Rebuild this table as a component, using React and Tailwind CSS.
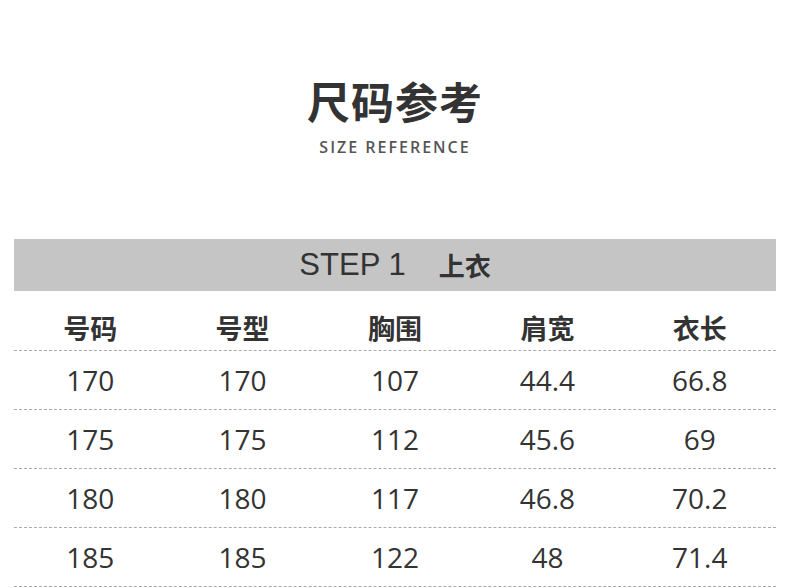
export default function App() {
  const cols = ["号码", "号型", "胸围", "肩宽", "衣长"];
  const rows = [
    ["170", "170", "107", "44.4", "66.8"],
    ["175", "175", "112", "45.6", "69"],
    ["180", "180", "117", "46.8", "70.2"],
    ["185", "185", "122", "48", "71.4"],
  ];
  const cjk = { fontFamily: '"Noto Sans CJK SC", "Noto Sans", sans-serif' };
  return (
    <div className="w-[790px] h-[588px] bg-white overflow-hidden text-[#333]">
      <div className="h-[239px] flex flex-col items-center pt-[74px]">
        <div className="text-[43px] leading-[52px] font-bold tracking-[1px]" style={cjk}>
          尺码参考
        </div>
        <div
          className="mt-[11px] text-[16px] leading-[20px] font-semibold tracking-[2px] text-[#555]"
          style={{ fontFamily: '"Open Sans", "Noto Sans", sans-serif' }}
        >
          SIZE REFERENCE
        </div>
      </div>
      <div className="mx-[14px]">
        <div className="h-[52px] bg-[#c5c5c5] flex items-center justify-center">
          <span
            className="text-[31px] leading-[34px] text-[#333]"
            style={{ fontFamily: '"Liberation Sans", Arial, sans-serif' }}
          >
            STEP 1
          </span>
          <span className="ml-[33px] text-[26px] leading-[34px] font-bold" style={cjk}>
            上衣
          </span>
        </div>
        <div className="grid grid-cols-5 h-[60px] pt-[22px] border-b border-dashed border-[#aaa]">
          {cols.map((c) => (
            <div key={c} className="text-center text-[27px] leading-[30px] font-bold" style={cjk}>
              {c}
            </div>
          ))}
        </div>
        {rows.map((r, i) => (
          <div
            key={i}
            className="grid grid-cols-5 h-[59px] items-center border-b border-dashed border-[#aaa]"
          >
            {r.map((v, j) => (
              <div
                key={j}
                className="text-center text-[28px] leading-[32px]"
                style={{ fontFamily: '"Open Sans", "Noto Sans", sans-serif' }}
              >
                {v}
              </div>
            ))}
          </div>
        ))}
      </div>
    </div>
  );
}
